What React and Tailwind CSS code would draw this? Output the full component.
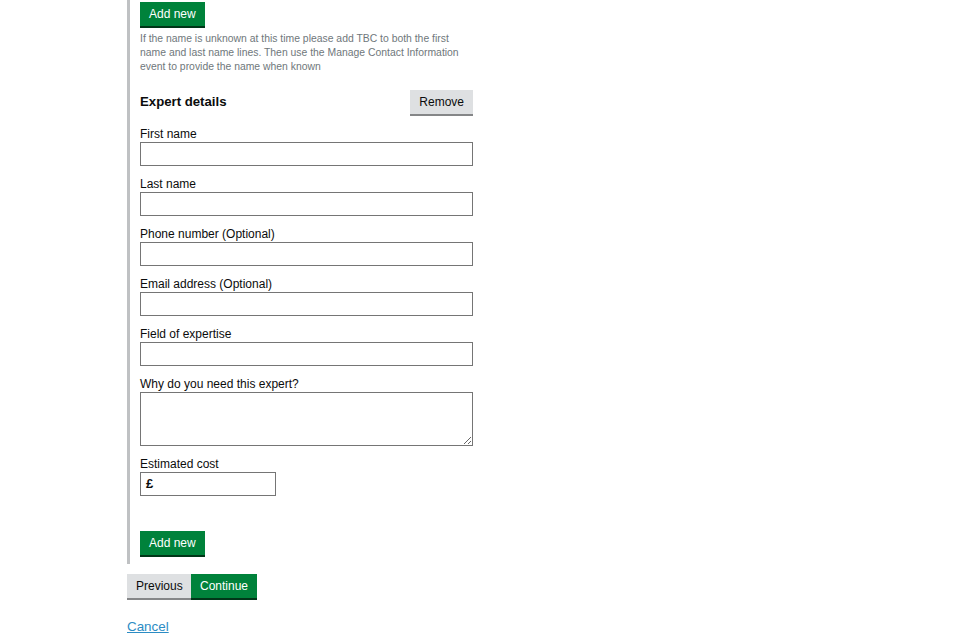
const FIELDS = [
  { label: 'First name' },
  { label: 'Last name' },
  { label: 'Phone number (Optional)' },
  { label: 'Email address (Optional)' },
  { label: 'Field of expertise' },
];

function GreenButton({ children, className = '' }) {
  return (
    <button className={`h-[24px] px-[9px] bg-[#00823b] text-white text-[12px] leading-[24px] shadow-[0_2px_0_#003618] ${className}`}>
      {children}
    </button>
  );
}

function GreyButton({ children, className = '' }) {
  return (
    <button className={`h-[24px] px-[9px] bg-[#dee0e2] text-[#0b0c0c] text-[12px] leading-[24px] shadow-[0_2px_0_#858688] ${className}`}>
      {children}
    </button>
  );
}

export default function App() {
  return (
    <div className="w-[960px] h-[640px] overflow-hidden bg-white pl-[127px] text-[#0b0c0c] font-['Liberation_Sans',Arial,sans-serif]">
      <div className="border-l-[3px] border-[#bfc1c3] pl-[10px] pt-[1px] pb-[9px] w-[350px]">
        <GreenButton>Add new</GreenButton>
        <p className="mt-[6px] w-[330px] text-[10.4px] leading-[14px] text-[#6f777b]">
          If the name is unknown at this time please add TBC to both the first name and last name lines. Then use the Manage Contact Information event to provide the name when known
        </p>

        <div className="mt-[16px] w-[333px] flex items-center justify-between">
          <h2 className="text-[13.2px] font-bold">Expert details</h2>
          <GreyButton>Remove</GreyButton>
        </div>

        <div className="mt-[13px]">
          {FIELDS.map(f => (
            <div key={f.label} className="mb-[11px]">
              <label className="block text-[12px] leading-[15px]">{f.label}</label>
              <input type="text" className="block w-[333px] h-[24px] border border-[#757575] bg-white" />
            </div>
          ))}
          <div className="mb-[11px]">
            <label className="block text-[12px] leading-[15px]">Why do you need this expert?</label>
            <textarea className="block w-[333px] h-[54px] border border-[#757575] bg-white" />
          </div>
          <div>
            <label className="block text-[12px] leading-[15px]">Estimated cost</label>
            <div className="flex items-center w-[136px] h-[24px] border border-[#757575]">
              <span className="pl-[5px] text-[13px] font-bold">£</span>
              <input type="text" className="flex-1 min-w-0 h-full outline-none" />
            </div>
          </div>
        </div>

        <GreenButton className="mt-[35px]">Add new</GreenButton>
      </div>

      <div className="mt-[10px] flex">
        <GreyButton className="w-[64px] px-0">Previous</GreyButton>
        <GreenButton className="w-[66px] px-0">Continue</GreenButton>
      </div>

      <a href="#" className="inline-block mt-[19px] text-[13.4px] text-[#2b8cc4] underline">Cancel</a>
    </div>
  );
}
